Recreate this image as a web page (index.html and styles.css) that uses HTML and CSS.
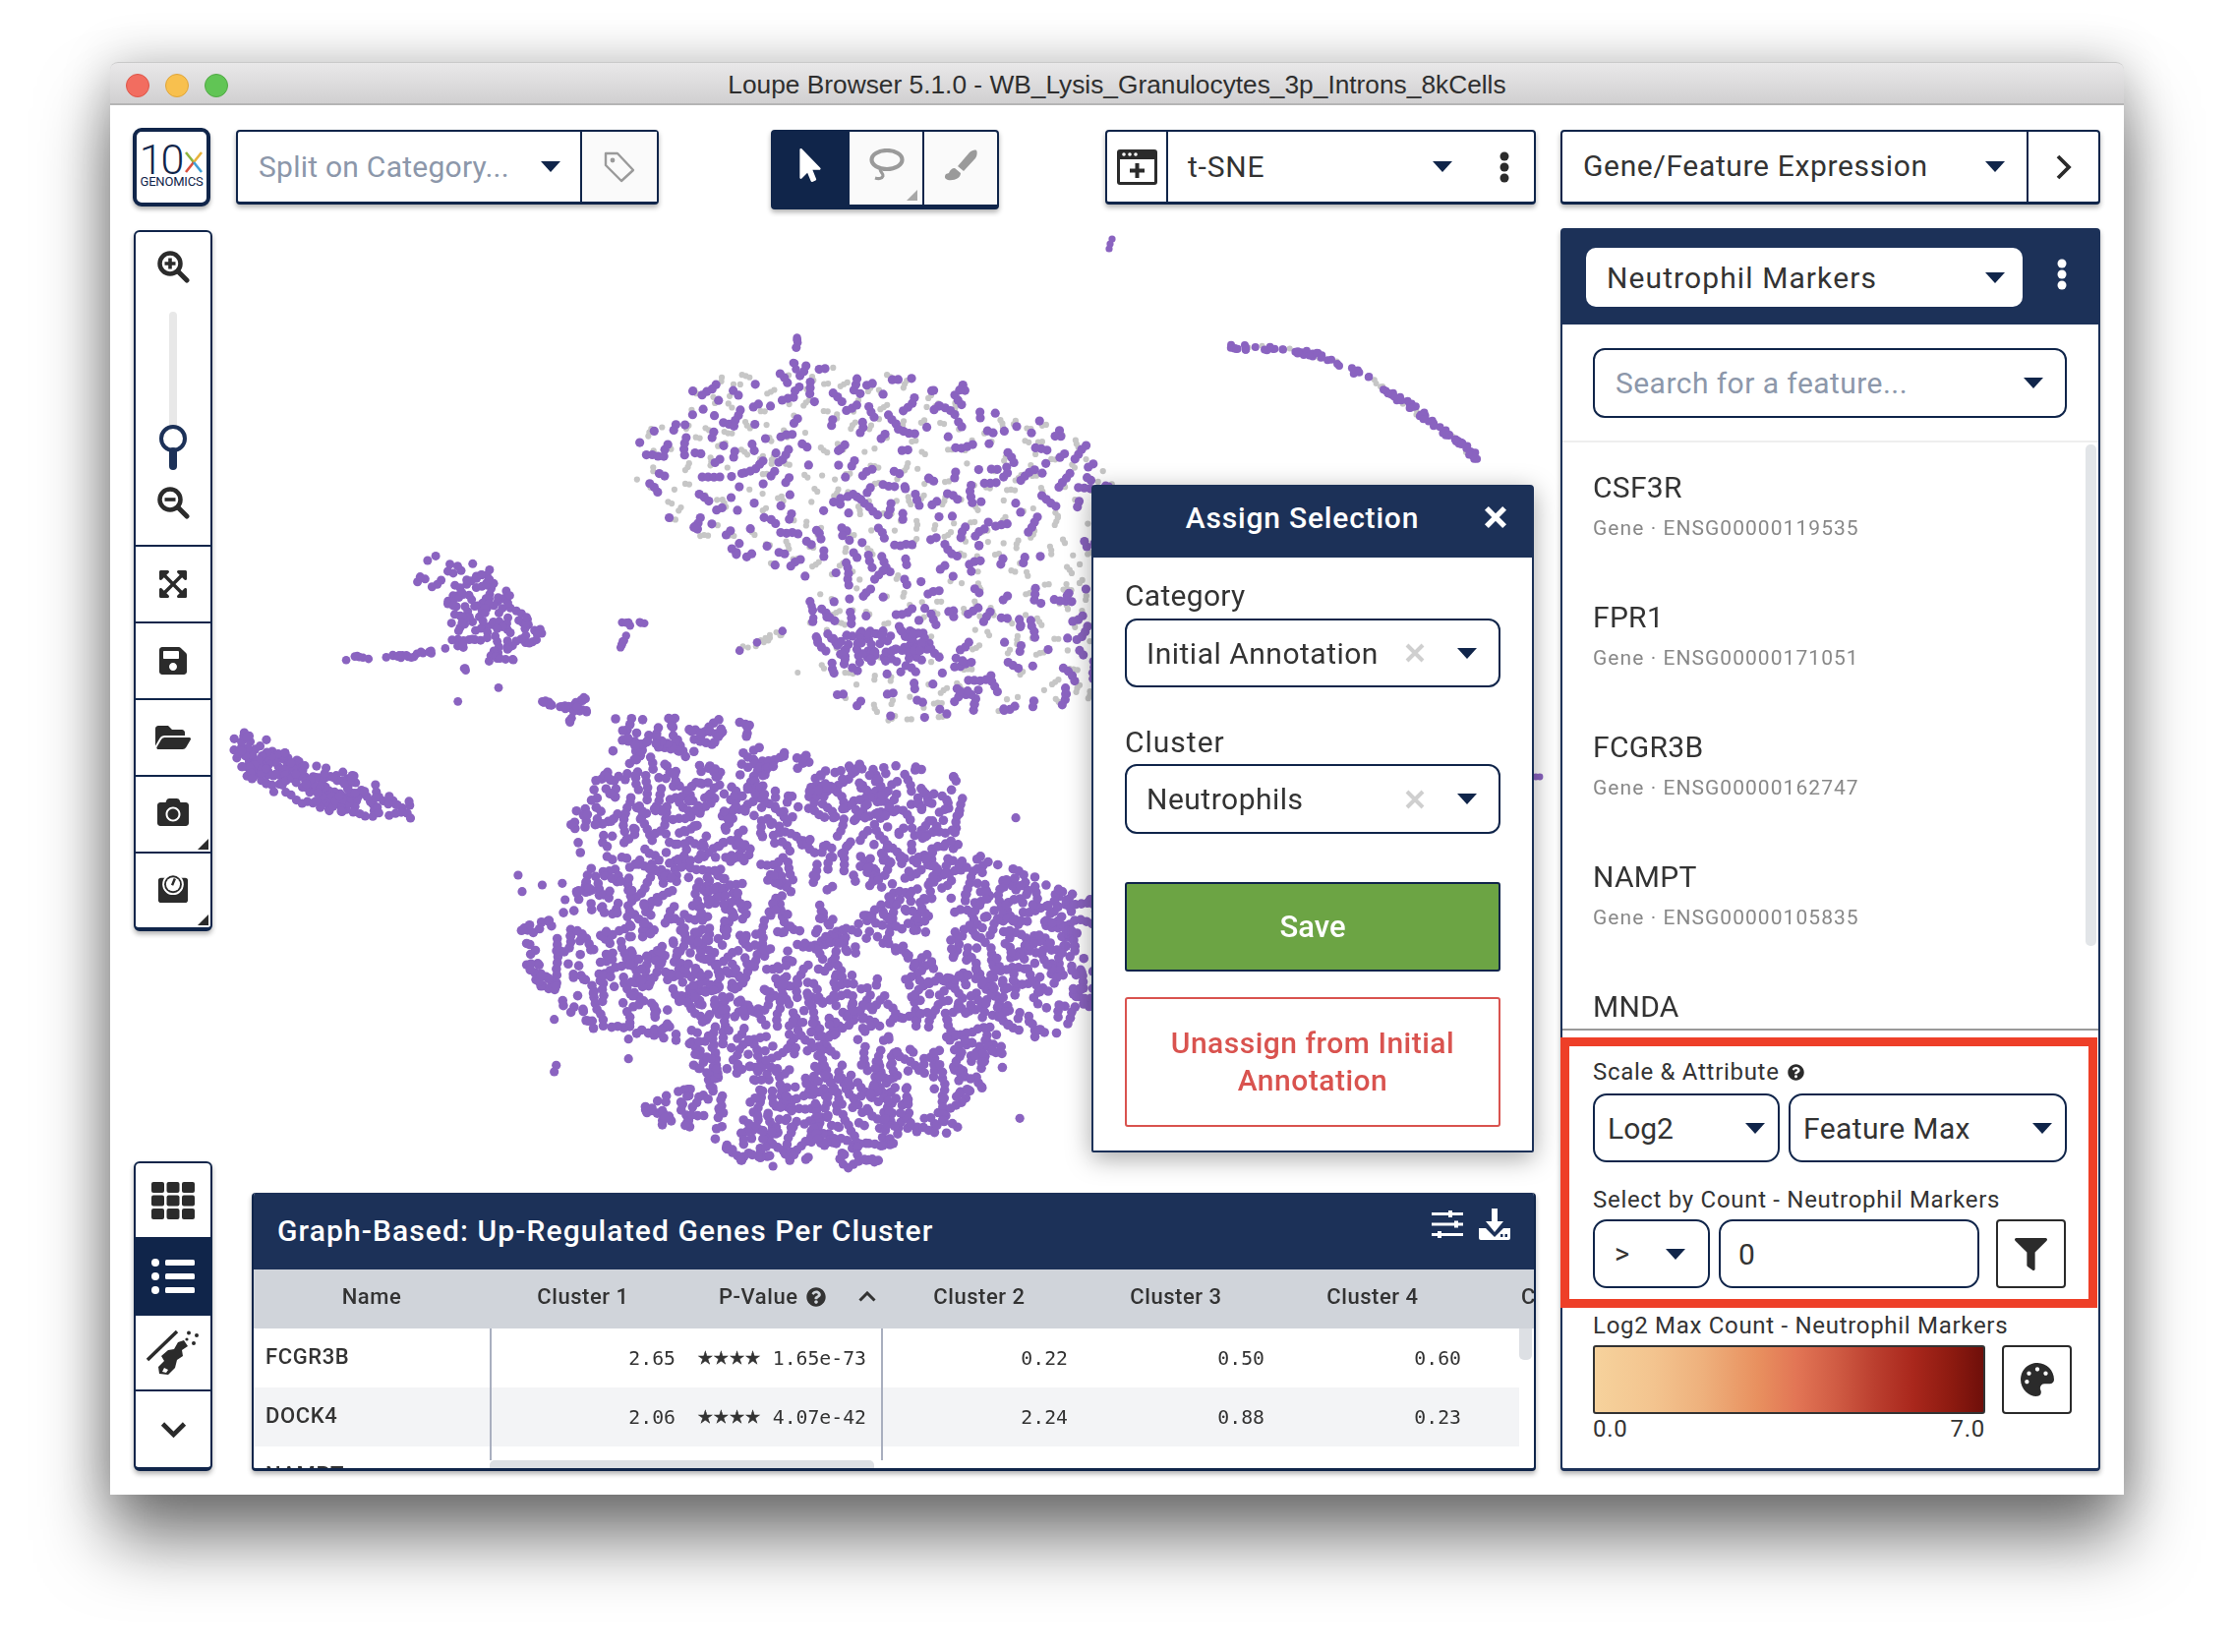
FILE: index.html
```html
<!DOCTYPE html>
<html lang="en">
<head>
<meta charset="utf-8">
<title>Loupe Browser</title>
<link rel="stylesheet" href="styles.css">
</head>
<body>
<div class="window">
  <header class="titlebar">
    <div class="lights"><i class="light red"></i><i class="light yellow"></i><i class="light green"></i></div>
    <div class="wintitle">Loupe Browser 5.1.0 - WB_Lysis_Granulocytes_3p_Introns_8kCells</div>
  </header>
  <div class="content">
    <aside class="rail">
      <div class="logo">
        <div class="logo-top"><span class="logo-ten">10</span><svg class="logo-x" viewBox="0 0 20 22"><path d="M2 1 L10 11" stroke="#8db53c" stroke-width="2.600" fill="none"/><path d="M18 1 L10 11" stroke="#e8b23a" stroke-width="2.600" fill="none"/><path d="M10 11 L2 21" stroke="#d94f3d" stroke-width="2.600" fill="none"/><path d="M10 11 L18 21" stroke="#3f9fd8" stroke-width="2.600" fill="none"/></svg></div>
        <div class="logo-sub">GENOMICS</div>
      </div>
      <div class="tools">
        <div class="tool zoomtool">
          <svg class="ic-mag" viewBox="0 0 34 34"><circle cx="14" cy="14" r="10.500" fill="none" stroke="#2b2b2b" stroke-width="4.500"/><path d="M22 22 L31 31" stroke="#2b2b2b" stroke-width="5" stroke-linecap="round"/><path d="M14 8.500v11M8.500 14h11" stroke="#2b2b2b" stroke-width="3.600"/></svg>
          <div class="slider"><div class="slider-track"></div><svg class="slider-knob" viewBox="0 0 34 48"><circle cx="17" cy="15" r="12" fill="#fff" stroke="#1c3158" stroke-width="4"/><path d="M17 28 V43" stroke="#1c3158" stroke-width="8" stroke-linecap="round"/></svg></div>
          <svg class="ic-mag" viewBox="0 0 34 34"><circle cx="14" cy="14" r="10.500" fill="none" stroke="#2b2b2b" stroke-width="4.500"/><path d="M22 22 L31 31" stroke="#2b2b2b" stroke-width="5" stroke-linecap="round"/><path d="M8.500 14h11" stroke="#2b2b2b" stroke-width="3.600"/></svg>
        </div>
        <div class="tool"><svg class="ic-28" viewBox="0 32 448 448"><path fill="#2b2b2b" d="M448.100 344v112c0 13.300-10.700 24-24 24h-112c-21.400 0-32.100-25.900-17-41l36.200-36.200L224 295.600 116.800 402.900 153 439c15.100 15.100 4.400 41-17 41H24c-13.300 0-24-10.700-24-24V344c0-21.400 25.900-32.100 41-17l36.200 36.200L184.500 256 77.200 148.700 41 185c-15.100 15.100-41 4.400-41-17V56c0-13.300 10.700-24 24-24h112c21.400 0 32.100 25.900 17 41l-36.200 36.200L224 216.400l107.300-107.300L295.100 73c-15.100-15.100-4.400-41 17-41h112c13.300 0 24 10.700 24 24v112c0 21.400-25.900 32.100-41 17l-36.200-36.200L263.600 256l107.300 107.300 36.200-36.200c15.100-15.200 41-4.500 41 16.900z"/></svg></div>
        <div class="tool"><svg class="ic-30" viewBox="0 0 448 512"><path fill="#2b2b2b" d="M433.941 129.941l-83.882-83.882A48 48 0 0 0 316.118 32H48C21.490 32 0 53.490 0 80v352c0 26.510 21.490 48 48 48h352c26.510 0 48-21.490 48-48V163.882a48 48 0 0 0-14.059-33.941zM224 416c-35.346 0-64-28.654-64-64 0-35.346 28.654-64 64-64s64 28.654 64 64c0 35.346-28.654 64-64 64zm96-304.520V212c0 6.627-5.373 12-12 12H76c-6.627 0-12-5.373-12-12V108c0-6.627 5.373-12 12-12h228.520c3.183 0 6.235 1.264 8.485 3.515l3.480 3.480A11.996 11.996 0 0 1 320 111.480z"/></svg></div>
        <div class="tool"><svg class="ic-36" viewBox="0 0 576 512"><path fill="#2b2b2b" d="M572.694 292.093L500.270 416.248A63.997 63.997 0 0 1 444.989 448H45.025c-18.523 0-30.064-20.093-20.731-36.093l72.424-124.155A64 64 0 0 1 152 256h399.964c18.523 0 30.064 20.093 20.730 36.093zM152 224h328v-48c0-26.510-21.490-48-48-48H272l-64-64H48C21.490 64 0 85.490 0 112v278.046l69.077-118.418C86.214 242.250 117.989 224 152 224z"/></svg></div>
        <div class="tool"><svg class="ic-32" viewBox="0 0 512 512"><path fill="#2b2b2b" d="M512 144v288c0 26.500-21.500 48-48 48H48c-26.500 0-48-21.500-48-48V144c0-26.500 21.500-48 48-48h88l12.300-32.900c7-18.700 24.900-31.100 44.900-31.100h125.500c20 0 37.900 12.400 44.900 31.100L376 96h88c26.500 0 48 21.500 48 48zM376 288c0-66.200-53.800-120-120-120s-120 53.800-120 120 53.800 120 120 120 120-53.800 120-120zm-32 0c0 48.500-39.500 88-88 88s-88-39.500-88-88 39.500-88 88-88 88 39.500 88 88z"/></svg><i class="corner"></i></div>
        <div class="tool"><svg class="ic-32" viewBox="0 0 34 32"><path fill="#2b2b2b" d="M4 5h26a3 3 0 0 1 3 3v21a3 3 0 0 1-3 3H4a3 3 0 0 1-3-3V8a3 3 0 0 1 3-3z"/><circle cx="17" cy="12" r="11.500" fill="#fff"/><circle cx="17" cy="12" r="9.500" fill="#2b2b2b"/><circle cx="17" cy="12" r="7.500" fill="#fff"/><path d="M16 13 L19 6" stroke="#2b2b2b" stroke-width="2.600"/></svg><i class="corner"></i></div>
      </div>
      <div class="tools tools-low">
        <div class="tool"><svg class="ic-44" viewBox="0 0 44 38"><g fill="#2b2b2b"><rect x="0" y="0" width="13" height="11" rx="2"/><rect x="15.500" y="0" width="13" height="11" rx="2"/><rect x="31" y="0" width="13" height="11" rx="2"/><rect x="0" y="13.500" width="13" height="11" rx="2"/><rect x="15.500" y="13.500" width="13" height="11" rx="2"/><rect x="31" y="13.500" width="13" height="11" rx="2"/><rect x="0" y="27" width="13" height="11" rx="2"/><rect x="15.500" y="27" width="13" height="11" rx="2"/><rect x="31" y="27" width="13" height="11" rx="2"/></g></svg></div>
        <div class="tool tool-on"><svg class="ic-44" viewBox="0 0 44 38"><g fill="#fff"><circle cx="4" cy="5" r="4"/><circle cx="4" cy="19" r="4"/><circle cx="4" cy="33" r="4"/><rect x="14" y="2" width="30" height="6" rx="1.500"/><rect x="14" y="16" width="30" height="6" rx="1.500"/><rect x="14" y="30" width="30" height="6" rx="1.500"/></g></svg></div>
        <div class="tool"><svg class="ic-54" viewBox="0 0 54 46"><path d="M1 30 L31 1" stroke="#2b2b2b" stroke-width="3.500"/><path fill="#2b2b2b" d="M38 10l4 6-6 4 1 6-6 4-2 8-7 7-9-1-1-7 6-6-3-5 7-6 6-1 4-7zM18 38l-2 4 4 1 2-3z"/><circle cx="43" cy="2.500" r="2" fill="#2b2b2b"/><circle cx="51" cy="5" r="2" fill="#2b2b2b"/><circle cx="48" cy="13" r="2" fill="#2b2b2b"/><circle cx="41" cy="9" r="1.600" fill="#2b2b2b"/></svg></div>
        <div class="tool"><svg class="ic-26" viewBox="0 0 26 16"><path d="M2 2 L13 13 L24 2" fill="none" stroke="#2b2b2b" stroke-width="4.600"/></svg></div>
      </div>
    </aside>

    <main class="center">
      <div class="topbar">
        <div class="box split">
          <div class="box-main"><span class="placeholder ph-split">Split on Category...</span><i class="caret"></i></div>
          <div class="box-side"><svg class="ic-tag" viewBox="0 0 32 32"><path d="M2 2h12l16 17-12 11L2 14z" fill="none" stroke="#9a9a9a" stroke-width="2.400" stroke-linejoin="round"/><circle cx="9" cy="9" r="2.400" fill="#9a9a9a"/></svg></div>
        </div>
        <div class="modes">
          <div class="mode mode-on"><svg class="ic-cursor" viewBox="0 0 320 512"><path fill="#fff" d="M302.189 329.126H196.105l55.831 135.993c3.889 9.428-.555 19.999-9.444 23.999l-49.165 21.427c-9.165 4-19.443-.571-23.332-9.714l-53.053-129.136-86.664 89.138C18.729 472.710 0 463.554 0 447.977V18.299C0 1.899 19.921-6.096 30.277 5.443l284.412 292.542c11.472 11.179 3.007 31.141-12.500 31.141z"/></svg></div>
          <div class="mode"><svg class="ic-lasso" viewBox="0 0 38 34"><ellipse cx="20" cy="11.500" rx="15.500" ry="9.500" fill="none" stroke="#9a9a9a" stroke-width="4.200"/><path d="M14 20c-3 3 3 5 2 8-1 3-5 3-8 2" fill="none" stroke="#9a9a9a" stroke-width="3.200"/></svg><i class="corner corner-gray"></i></div>
          <div class="mode"><svg class="ic-brush" viewBox="0 0 34 32"><path fill="#9a9a9a" d="M33 1c1 1 1 5-1 8L20 22l-6-5L26 3c2-2 6-3 7-2z"/><path fill="#9a9a9a" d="M11 19l6 5c0 5-6 8-13 7-3-1-4-3-2-6l3-1c1-3 3-5 6-5z"/></svg></div>
        </div>
        <div class="box tsne">
          <div class="box-icon"><svg class="ic-win" viewBox="0 0 41 36"><path fill="#2b2b2b" d="M3 0h35a3 3 0 0 1 3 3v30a3 3 0 0 1-3 3H3a3 3 0 0 1-3-3V3a3 3 0 0 1 3-3z"/><rect x="3" y="10" width="35" height="23" fill="#fff"/><circle cx="7" cy="5" r="1.800" fill="#fff"/><circle cx="13" cy="5" r="1.800" fill="#fff"/><circle cx="19" cy="5" r="1.800" fill="#fff"/><path d="M20.500 14v15M13 21.500h15" stroke="#2b2b2b" stroke-width="4"/></svg></div>
          <div class="box-main"><span class="val val-tsne">t-SNE</span><i class="caret caret-push"></i><svg class="ic-dots" viewBox="0 0 10 32"><circle cx="5" cy="5" r="4.500"/><circle cx="5" cy="16" r="4.500"/><circle cx="5" cy="27" r="4.500"/></svg></div>
        </div>
      </div>

      <div class="plot">
        <canvas id="scatter" class="scatter" width="1370" height="999"></canvas>
        <section class="modal">
          <div class="modal-head"><span class="modal-title">Assign Selection</span><svg class="ic-close" viewBox="0 0 20 20"><path d="M3 3 L17 17 M17 3 L3 17" stroke="#fff" stroke-width="4.200"/></svg></div>
          <div class="modal-body">
            <div class="mlabel">Category</div>
            <div class="msel"><span class="mval">Initial Annotation</span><svg class="ic-x" viewBox="0 0 20 20"><path d="M2 2 L18 18 M18 2 L2 18" stroke="#cfcfcf" stroke-width="4"/></svg><i class="caret"></i></div>
            <div class="mlabel mlabel2">Cluster</div>
            <div class="msel msel2"><span class="mval">Neutrophils</span><svg class="ic-x" viewBox="0 0 20 20"><path d="M2 2 L18 18 M18 2 L2 18" stroke="#cfcfcf" stroke-width="4"/></svg><i class="caret"></i></div>
            <div class="btn-save">Save</div>
            <div class="btn-unassign">Unassign from Initial<br>Annotation</div>
          </div>
        </section>
      </div>

      <section class="tablepanel">
        <div class="tp-head"><span class="tp-title">Graph-Based: Up-Regulated Genes Per Cluster</span>
          <svg class="ic-sliders" viewBox="0 0 32 28"><g fill="#fff"><rect y="2" width="32" height="3"/><rect y="12.500" width="32" height="3"/><rect y="23" width="32" height="3"/><rect x="17" y="0" width="4" height="7"/><rect x="23" y="10.500" width="4" height="7"/><rect x="6" y="21" width="4" height="7"/></g></svg>
          <svg class="ic-dl" viewBox="0 0 32 32"><path fill="#fff" d="M13 0h6v13h6L16 24 7 13h6z"/><path fill="#fff" d="M0 20h7l9 9 9-9h7v10a2 2 0 0 1-2 2H2a2 2 0 0 1-2-2z"/><rect x="22" y="26" width="2.500" height="3" fill="#1c3158"/><rect x="26.500" y="26" width="2.500" height="3" fill="#1c3158"/></svg>
        </div>
        <div class="tbl-head">
          <div class="th">Name</div><div class="th">Cluster 1</div>
          <div class="th th-p"><span>P-Value</span><svg class="ic-help" viewBox="0 0 512 512"><path fill="#333" d="M504 256c0 136.997-111.043 248-248 248S8 392.997 8 256C8 119.083 119.043 8 256 8s248 111.083 248 248zM262.655 90c-54.497 0-89.255 22.957-116.549 63.758-3.536 5.286-2.353 12.415 2.715 16.258l34.699 26.310c5.205 3.947 12.621 3.008 16.665-2.122 17.864-22.658 30.113-35.797 57.303-35.797 20.429 0 45.698 13.148 45.698 32.958 0 14.976-12.363 22.667-32.534 33.976C247.128 238.528 216 254.941 216 296v4c0 6.627 5.373 12 12 12h56c6.627 0 12-5.373 12-12v-1.333c0-28.462 83.186-29.647 83.186-106.667 0-58.002-60.165-102-116.531-102zM256 338c-25.365 0-46 20.635-46 46 0 25.364 20.635 46 46 46s46-20.636 46-46c0-25.365-20.635-46-46-46z"/></svg><svg class="ic-up" viewBox="0 0 18 11"><path d="M1.500 9.500 L9 2 L16.500 9.500" fill="none" stroke="#333" stroke-width="3"/></svg></div>
          <div class="th">Cluster 2</div><div class="th">Cluster 3</div><div class="th">Cluster 4</div><div class="th th-cut">Cluster 5</div>
        </div>
        <div class="tbl-body">
          <div class="tr"><div class="td-name">FCGR3B</div><div class="td-num">2.65</div><div class="td-p"><span class="stars">★★★★</span><span>1.65e-73</span></div><div class="td-num">0.22</div><div class="td-num">0.50</div><div class="td-num">0.60</div></div>
          <div class="tr tr-alt"><div class="td-name">DOCK4</div><div class="td-num">2.06</div><div class="td-p"><span class="stars">★★★★</span><span>4.07e-42</span></div><div class="td-num">2.24</div><div class="td-num">0.88</div><div class="td-num">0.23</div></div>
          <div class="tr"><div class="td-name">NAMPT</div></div>
          <i class="vline vline-a"></i><i class="vline vline-b"></i>
          <i class="hscroll"></i><i class="vscroll"></i>
        </div>
      </section>
    </main>

    <aside class="right">
      <div class="box gene">
        <div class="box-main"><span class="val val-gene">Gene/Feature Expression</span><i class="caret"></i></div>
        <div class="box-chev"><svg class="ic-chev" viewBox="0 0 16 26"><path d="M2 2 L13 13 L2 24" fill="none" stroke="#2b2b2b" stroke-width="3.800"/></svg></div>
      </div>
      <section class="panel">
        <div class="panel-head">
          <div class="panel-sel"><span class="val val-neut">Neutrophil Markers</span><i class="caret"></i></div>
          <svg class="ic-dots ic-dots-w" viewBox="0 0 10 32"><circle cx="5" cy="5" r="4.500"/><circle cx="5" cy="16" r="4.500"/><circle cx="5" cy="27" r="4.500"/></svg>
        </div>
        <div class="search-wrap"><div class="search"><span class="placeholder ph-search">Search for a feature...</span><i class="caret"></i></div></div>
        <div class="list">
          <div class="item"><div class="item-name">CSF3R</div><div class="item-sub">Gene · ENSG00000119535</div></div>
          <div class="item"><div class="item-name">FPR1</div><div class="item-sub">Gene · ENSG00000171051</div></div>
          <div class="item"><div class="item-name">FCGR3B</div><div class="item-sub">Gene · ENSG00000162747</div></div>
          <div class="item"><div class="item-name">NAMPT</div><div class="item-sub">Gene · ENSG00000105835</div></div>
          <div class="item"><div class="item-name">MNDA</div></div>
          <i class="list-scroll"></i>
        </div>
        <div class="highlight">
          <div class="lbl">Scale &amp; Attribute <svg class="ic-help2" viewBox="0 0 512 512"><path fill="#2b2b2b" d="M504 256c0 136.997-111.043 248-248 248S8 392.997 8 256C8 119.083 119.043 8 256 8s248 111.083 248 248zM262.655 90c-54.497 0-89.255 22.957-116.549 63.758-3.536 5.286-2.353 12.415 2.715 16.258l34.699 26.310c5.205 3.947 12.621 3.008 16.665-2.122 17.864-22.658 30.113-35.797 57.303-35.797 20.429 0 45.698 13.148 45.698 32.958 0 14.976-12.363 22.667-32.534 33.976C247.128 238.528 216 254.941 216 296v4c0 6.627 5.373 12 12 12h56c6.627 0 12-5.373 12-12v-1.333c0-28.462 83.186-29.647 83.186-106.667 0-58.002-60.165-102-116.531-102zM256 338c-25.365 0-46 20.635-46 46 0 25.364 20.635 46 46 46s46-20.636 46-46c0-25.365-20.635-46-46-46z"/></svg></div>
          <div class="row row-a">
            <div class="sel sel-log"><span class="val">Log2</span><i class="caret"></i></div>
            <div class="sel sel-feat"><span class="val val-feat">Feature Max</span><i class="caret"></i></div>
          </div>
          <div class="lbl lbl2">Select by Count - Neutrophil Markers</div>
          <div class="row row-b">
            <div class="sel sel-gt"><span class="val val-gt">&gt;</span><i class="caret"></i></div>
            <div class="sel sel-num"><span class="val">0</span></div>
            <div class="sqbtn sqbtn-f"><svg class="ic-filter" viewBox="0 0 512 512"><path fill="#2b2b2b" d="M487.976 0H24.028C2.710 0-8.047 25.866 7.058 40.971L192 225.941V432c0 7.831 3.821 15.170 10.237 19.662l80 55.980C298.020 518.690 320 507.493 320 487.980V225.941l184.947-184.970C520.021 25.896 509.338 0 487.976 0z"/></svg></div>
          </div>
        </div>
        <div class="legend">
          <div class="lbl">Log2 Max Count - Neutrophil Markers</div>
          <div class="legend-row">
            <div class="gradient"></div>
            <div class="sqbtn sqbtn-p"><svg class="ic-palette" viewBox="0 0 512 512"><path fill="#2b2b2b" d="M204.300 5C104.900 24.400 24.800 104.300 5.200 203.400c-37 187 131.700 326.400 258.800 306.700 41.200-6.400 61.400-54.600 42.500-91.700-23.100-45.400 9.900-98.400 60.900-98.400h79.700c35.800 0 64.800-29.600 64.900-65.300C511.500 97.100 368.100-26.900 204.300 5zM96 320c-17.700 0-32-14.300-32-32s14.300-32 32-32 32 14.300 32 32-14.300 32-32 32zm32-128c-17.700 0-32-14.300-32-32s14.300-32 32-32 32 14.300 32 32-14.300 32-32 32zm128-64c-17.700 0-32-14.300-32-32s14.300-32 32-32 32 14.300 32 32-14.300 32-32 32zm128 64c-17.700 0-32-14.300-32-32s14.300-32 32-32 32 14.300 32 32-14.300 32-32 32z"/></svg></div>
          </div>
          <div class="legend-scale"><span>0.0</span><span>7.0</span></div>
        </div>
      </section>
    </aside>
  </div>
</div>
<script src="script.js"></script>
</body>
</html>
```
FILE: styles.css
```css
* { box-sizing: border-box; }
html, body { margin: 0; padding: 0; background: #fff; }
body { width: 2272px; height: 1680px; overflow: hidden; font-family: Roboto, "Liberation Sans", sans-serif; color: #333; }
svg { display: block; flex: none; }
i { display: block; }

.window { width: 2048px; height: 1457px; margin: 63px 0 0 112px; background: #fff; border-radius: 8px 8px 0 0; display: flex; flex-direction: column; box-shadow: 0 46px 70px rgba(0,0,0,.52), 0 0 50px rgba(0,0,0,.22); }

.titlebar { height: 44px; flex: none; position: relative; display: flex; align-items: center; justify-content: center; background: linear-gradient(#e9e8e9, #d1d0d1); border-bottom: 2px solid #b5b5b5; border-top: 1px solid #c9c9c9; border-radius: 8px 8px 0 0; }
.lights { position: absolute; left: 16px; top: 11px; display: flex; gap: 16px; }
.light { width: 24px; height: 24px; border-radius: 50%; }
.red { background: #f26d60; border: 1px solid #de5548; }
.yellow { background: #f8c04e; border: 1px solid #dfa53a; }
.green { background: #61c555; border: 1px solid #51a945; }
.wintitle { font-family: "Liberation Sans", sans-serif; font-size: 26.300px; color: #2e2e2e; padding-top: 3px; white-space: nowrap; }

.content { flex: 1; display: flex; padding: 25px 24px 24px 24px; min-height: 0; }

.rail { width: 80px; flex: none; display: flex; flex-direction: column; }
.logo { width: 79px; height: 80px; margin: -2px 0 0 -1px; border: 4px solid #10254a; border-radius: 9px; display: flex; flex-direction: column; align-items: center; background: #fff; box-shadow: 0 3px 4px rgba(0,0,0,.3); }
.logo-top { display: flex; align-items: center; height: 40px; margin-top: 8px; }
.logo-ten { font-size: 43px; font-weight: 300; line-height: 40px; color: #10254a; letter-spacing: -2px; }
.logo-x { width: 20px; height: 24px; margin-top: 6px; margin-left: 2px; }
.logo-sub { font-size: 13px; line-height: 14px; color: #10254a; letter-spacing: -.2px; margin-top: -4px; }

.tools { width: 80px; margin-top: 24px; border: 2px solid #10254a; border-bottom-width: 4px; border-radius: 6px; background: #fff; box-shadow: 0 3px 5px rgba(0,0,0,.3); }
.tools-low { margin-top: auto; }
.tool { height: 78px; position: relative; display: flex; align-items: center; justify-content: center; border-bottom: 2px solid #10254a; }
.tool:last-child { border-bottom: 0; height: 75px; }
.tools-low .tool { height: 77px; }
.tools-low .tool-on { background: #10254a; height: 78px; }
.zoomtool { height: 320px; flex-direction: column; justify-content: flex-start; padding-top: 18px; }
.ic-mag { width: 34px; height: 34px; }
.slider { width: 34px; height: 192px; margin: 8px 0 6px; position: relative; }
.slider-track { width: 8px; height: 130px; margin: 21px auto 0; background: #e8e8e8; border-radius: 4px; }
.slider-knob { width: 34px; height: 48px; position: absolute; left: 0; top: 135px; }
.ic-28 { width: 28px; height: 28px; }
.ic-30 { width: 30px; height: 32px; }
.ic-36 { width: 36px; height: 32px; }
.ic-32 { width: 32px; height: 32px; margin-top: -5px; }
.ic-44 { width: 44px; height: 38px; }
.ic-54 { width: 54px; height: 46px; }
.ic-26 { width: 27px; height: 16px; }
.corner { position: absolute; right: 2px; bottom: 2px; width: 0; height: 0; border-style: solid; border-width: 0 0 11px 11px; border-color: transparent transparent #2b2b2b transparent; }
.corner-gray { border-color: transparent transparent #a8a8a8 transparent; right: 5px; bottom: 4px; }

.center { width: 1322px; flex: none; margin-left: 24px; display: flex; flex-direction: column; min-height: 0; }
.topbar { height: 81px; flex: none; display: flex; align-items: flex-start; }
.box { height: 76px; border: 2px solid #10254a; border-bottom-width: 3px; border-radius: 4px; background: #fff; display: flex; box-shadow: 0 3px 5px rgba(0,0,0,.3); }
.box-main { flex: 1; display: flex; align-items: center; justify-content: space-between; min-width: 0; }
.split { width: 430px; }
.split .box-main { padding: 0 20px 0 21px; }
.box-side { width: 78px; flex: none; background: #fafafa; border-left: 2px solid #10254a; display: flex; align-items: center; justify-content: center; }
.ic-tag { width: 32px; height: 32px; }
.placeholder { color: #8c97aa; font-size: 30px; white-space: nowrap; }
.ph-split { letter-spacing: .25px; }
.ph-search { letter-spacing: .45px; }
.val { font-size: 30px; color: #333; white-space: nowrap; }
.val-gene { letter-spacing: .65px; margin-top: -2px; }
.val-neut { letter-spacing: 1.100px; }
.val-tsne { letter-spacing: .8px; }
.val-feat { letter-spacing: .4px; }
.caret { width: 0; height: 0; flex: none; border-left: 10px solid transparent; border-right: 10px solid transparent; border-top: 11px solid #10254a; }

.modes { width: 232px; height: 81px; flex: none; margin-left: 114px; display: flex; border: 2px solid #10254a; border-bottom-width: 5px; border-radius: 4px; box-shadow: 0 3px 5px rgba(0,0,0,.3); background: #fafafa; }
.mode { flex: 1; position: relative; display: flex; align-items: center; justify-content: center; border-left: 2px solid #10254a; padding-bottom: 6px; }
.mode-on { background: #10254a; border-left: 0; flex: none; width: 76px; }
.ic-cursor { width: 22px; height: 34px; }
.ic-lasso { width: 38px; height: 34px; }
.ic-brush { width: 34px; height: 32px; }

.tsne { width: 438px; margin-left: auto; }
.box-icon { width: 62px; flex: none; border-right: 2px solid #10254a; display: flex; align-items: center; justify-content: center; }
.ic-win { width: 41px; height: 36px; }
.tsne .box-main { padding: 0 25px 0 20px; }
.caret-push { margin-left: auto; margin-right: 48px; }
.ic-dots { width: 10px; height: 32px; fill: #2b2b2b; }
.ic-dots-w { fill: #fff; }

.plot { flex: 1; position: relative; min-height: 0; }
.scatter { position: absolute; left: -20px; top: 0; width: 1370px; height: 999px; }

.modal { position: absolute; left: 870px; top: 280px; width: 450px; height: 679px; background: #fff; border: 2px solid #1c3158; border-radius: 4px 4px 2px 2px; box-shadow: 0 6px 26px rgba(0,0,0,.35); z-index: 3; }
.modal-head { height: 72px; background: #1c3158; color: #fff; display: flex; align-items: center; position: relative; justify-content: center; }
.modal-title { font-size: 30px; font-weight: 500; margin: -9px 0 0 -21px; letter-spacing: .8px; }
.ic-close { position: absolute; right: 24px; top: 18px; width: 26px; height: 26px; }
.modal-body { padding: 22px 32px 0; }
.mlabel { font-size: 30px; line-height: 36px; color: #333; margin-top: -1px; letter-spacing: .3px; }
.mlabel2 { margin-top: 38px; letter-spacing: 1px; }
.msel { height: 70px; margin-top: 5px; border: 2px solid #10254a; border-radius: 12px; display: flex; align-items: center; padding: 0 22px 0 20px; }
.msel2 { margin-top: 4px; height: 71px; }
.mval { font-size: 30px; flex: 1; color: #333; white-space: nowrap; letter-spacing: .5px; }
.ic-x { width: 20px; height: 20px; margin-right: 33px; }
.btn-save { height: 91px; margin-top: 49px; background: #6ca444; border: 2px solid #10254a; border-radius: 3px; color: #fff; font-size: 31px; font-weight: 500; display: flex; align-items: center; justify-content: center; }
.btn-unassign { height: 132px; margin-top: 26px; border: 2px solid #d9534f; border-radius: 3px; color: #d9534f; font-size: 30px; font-weight: 500; letter-spacing: .5px; line-height: 38px; text-align: center; display: flex; align-items: center; justify-content: center; }

.tablepanel { height: 283px; flex: none; margin-left: 16px; position: relative; z-index: 2; border: 2px solid #10254a; border-top: 0; border-bottom-width: 3px; border-radius: 4px; background: #fff; overflow: hidden; box-shadow: 0 3px 5px rgba(0,0,0,.3); }
.tp-head { height: 78px; background: #1c3158; color: #fff; display: flex; align-items: center; padding: 0 24px 0 24px; }
.tp-title { font-size: 30px; font-weight: 500; flex: 1; letter-spacing: 1.100px; white-space: nowrap; margin-top: -2px; }
.ic-sliders { width: 32px; height: 28px; margin: -14px 16px 0 0; }
.ic-dl { width: 32px; height: 32px; margin-top: -14px; }
.tbl-head { height: 60px; background: #d0d4da; display: grid; grid-template-columns: 240px 190px 208px 200px 200px 200px 60px; }
.th { font-size: 22px; font-weight: 500; letter-spacing: .55px; color: #333; display: flex; align-items: center; justify-content: center; white-space: nowrap; padding-bottom: 5px; }
.th-p { justify-content: flex-start; padding-left: 43px; }
.th-cut { justify-content: flex-start; padding-left: 51px; }
.ic-help { width: 20px; height: 20px; margin-left: 8px; }
.ic-up { width: 18px; height: 11px; margin-left: 33px; }
.tbl-body { position: relative; height: 145px; overflow: hidden; }
.tr { height: 60px; width: 1287px; display: grid; grid-template-columns: 240px 190px 208px 200px 200px 200px; overflow: hidden; align-items: center; }
.tr-alt { background: #f3f4f6; }
.td-name { font-size: 22px; font-weight: 500; letter-spacing: .6px; padding-left: 12px; color: #333; margin-top: -3px; }
.td-num { font-family: "DejaVu Sans Mono", monospace; font-size: 19.800px; color: #333; text-align: right; padding-right: 10px; }
.tr .td-num:nth-child(2) { padding-right: 1px; }
.td-p { font-family: "DejaVu Sans Mono", monospace; font-size: 19.800px; color: #333; display: flex; justify-content: flex-end; gap: 12px; padding-right: 15px; align-items: center; }
.stars { font-size: 18px; letter-spacing: 0; font-family: "DejaVu Sans", sans-serif; line-height: 20px; -webkit-text-stroke: .5px #333; }
.vline { position: absolute; top: 0; width: 2px; height: 134px; background: #a9afbf; }
.vline-a { left: 240px; }
.vline-b { left: 638px; }
.hscroll { position: absolute; left: 240px; top: 134px; width: 391px; height: 11px; background: #dde0e4; border-radius: 5px 5px 0 0; }
.vscroll { position: absolute; left: 1287px; top: 0; width: 13px; height: 32px; background: #dde0e4; border-radius: 0 0 5px 5px; }

.right { width: 549px; flex: none; margin-left: 25px; display: flex; flex-direction: column; min-height: 0; }
.gene { flex: none; }
.gene .box-main { padding: 0 22px 0 21px; }
.box-chev { width: 73px; flex: none; border-left: 2px solid #10254a; display: flex; align-items: center; justify-content: center; }
.ic-chev { width: 16px; height: 26px; }
.panel { flex: 1; margin-top: 24px; min-height: 0; display: flex; flex-direction: column; border: 2px solid #1c3158; border-bottom-width: 3px; border-radius: 4px; background: #fff; box-shadow: 0 3px 5px rgba(0,0,0,.3); }
.panel-head { height: 96px; flex: none; background: #1c3158; display: flex; align-items: flex-start; padding: 18px 0 0 24px; gap: 35px; }
.panel-sel { width: 444px; height: 60px; background: #fff; border-radius: 10px; display: flex; align-items: center; justify-content: space-between; padding: 0 18px 0 21px; }
.panel-head .ic-dots { margin-top: 11px; }
.search-wrap { height: 120px; flex: none; padding: 24px 32px 0 31px; border-bottom: 2px solid #eee; }
.search { height: 71px; border: 2px solid #10254a; border-radius: 12px; display: flex; align-items: center; justify-content: space-between; padding: 0 22px 0 21px; }
.list { flex: 1; min-height: 0; overflow: hidden; position: relative; padding: 28px 0 0 31px; border-bottom: 2px solid #9a9a9a; }
.item { height: 132px; }
.item-name { font-size: 30px; line-height: 36px; color: #333; letter-spacing: .3px; }
.item-sub { font-size: 21px; line-height: 30px; margin-top: 8px; color: #888; letter-spacing: 1.050px; white-space: nowrap; }
.list-scroll { position: absolute; right: 2px; top: 2px; width: 11px; height: 510px; background: #e2e5e8; border-radius: 5px; }

.highlight { height: 275px; flex: none; margin: 7px 1px 0 -2px; border: 9px solid #ee3f28; padding: 11px 0 0 24px; }
.lbl { font-size: 24px; line-height: 30px; color: #333; display: flex; align-items: center; gap: 8px; white-space: nowrap; letter-spacing: .7px; }
.lbl2 { margin-top: 23px; }
.ic-help2 { width: 17px; height: 17px; }
.row { display: flex; }
.row-a { margin-top: 7px; gap: 9px; }
.row-b { margin-top: 5px; gap: 9px; }
.sel { height: 70px; border: 2px solid #10254a; border-radius: 14px; display: flex; align-items: center; justify-content: space-between; }
.sel-log { width: 190px; padding: 0 13px 0 13px; }
.sel-feat { width: 283px; padding: 0 13px 0 13px; }
.sel-gt { width: 119px; padding: 0 23px 0 20px; }
.val-gt { font-size: 29px; }
.sel-num { width: 265px; padding: 0 18px; justify-content: flex-start; }
.sqbtn { height: 70px; width: 71px; margin-left: 8px; border: 2px solid #2b2b2b; border-radius: 4px; display: flex; align-items: center; justify-content: center; }
.ic-filter { width: 33px; height: 33px; }
.legend { height: 163px; flex: none; padding: 3px 0 0 31px; }
.legend-row { display: flex; margin-top: 5px; }
.gradient { width: 399px; height: 70px; border: 2px solid #333; border-radius: 3px; background: linear-gradient(90deg, #f6d29c 0%, #f3c48f 15%, #eeb07c 28%, #e8905f 42%, #e27555 52%, #d05c44 62%, #bb3f2f 72%, #a9271c 82%, #8c1a10 92%, #6f0f0a 100%); }
.sqbtn-p { margin-left: 17px; }
.ic-palette { width: 34px; height: 34px; }
.legend-scale { width: 399px; display: flex; justify-content: space-between; font-size: 24px; letter-spacing: .7px; line-height: 30px; color: #333; }
```
FILE: script.js
```js
(function () {
  var cv = document.getElementById('scatter');
  var ctx = cv.getContext('2d');
  var OX = 220, OY = 213;
  var PURPLE = '#8a63c0', GRAY = '#c6c6c6';

  var seed = 20210501;
  function rnd() {
    seed |= 0; seed = seed + 0x6D2B79F5 | 0;
    var t = Math.imul(seed ^ seed >>> 15, 1 | seed);
    t = t + Math.imul(t ^ t >>> 7, 61 | t) ^ t;
    return ((t ^ t >>> 14) >>> 0) / 4294967296;
  }

  function z8(p) { return [220 + p[0] / 1.742, 320 + p[1] / 3]; }
  function z9(p) { return [480 + p[0] / 2.45, 700 + p[1] / 3]; }
  function z2(p) { return [1100 + p[0] / 1.425, 50 + p[1] / 3]; }

  function inside(poly, x, y) {
    var c = false;
    for (var i = 0, j = poly.length - 1; i < poly.length; j = i++) {
      var a = poly[i], b = poly[j];
      if ((a[1] > y) !== (b[1] > y) && x < (b[0] - a[0]) * (y - a[1]) / (b[1] - a[1]) + a[0]) c = !c;
    }
    return c;
  }
  function bounds(poly) {
    var b = [1e9, 1e9, -1e9, -1e9];
    poly.forEach(function (p) {
      b[0] = Math.min(b[0], p[0]); b[1] = Math.min(b[1], p[1]);
      b[2] = Math.max(b[2], p[0]); b[3] = Math.max(b[3], p[1]);
    });
    return b;
  }
  function dot(x, y, r, color) {
    ctx.fillStyle = color;
    ctx.beginPath();
    ctx.arc(x - OX, y - OY, r, 0, Math.PI * 2);
    ctx.fill();
  }
  // smooth noise that opens white gaps in the clouds
  var NG = 64, grid = [];
  for (var n = 0; n < NG * NG; n++) grid.push(rnd());
  function noise(x, y, cell) {
    var fx = x / cell, fy = y / cell, ix = Math.floor(fx), iy = Math.floor(fy);
    var tx = fx - ix, ty = fy - iy;
    function g(a, b) { return grid[((a % NG) + NG) % NG + NG * (((b % NG) + NG) % NG)]; }
    var u = tx * tx * (3 - 2 * tx), v = ty * ty * (3 - 2 * ty);
    return (g(ix, iy) * (1 - u) + g(ix + 1, iy) * u) * (1 - v) + (g(ix, iy + 1) * (1 - u) + g(ix + 1, iy + 1) * u) * v;
  }
  // occupancy hash so clouds keep the spacing of an embedding
  var hash = {};
  function put(x, y) {
    var k = Math.floor(x / 14) + ':' + Math.floor(y / 14);
    (hash[k] = hash[k] || []).push([x, y]);
  }
  function near(x, y, d) {
    var cx = Math.floor(x / 14), cy = Math.floor(y / 14);
    for (var i = -1; i <= 1; i++) for (var j = -1; j <= 1; j++) {
      var c = hash[(cx + i) + ':' + (cy + j)];
      if (!c) continue;
      for (var k = 0; k < c.length; k++) {
        var dx = c[k][0] - x, dy = c[k][1] - y;
        if (dx * dx + dy * dy < d * d) return true;
      }
    }
    return false;
  }
  // short chains of dots inside a polygon
  function cloud(poly, target, minLen, maxLen, r, color, gap, clump, hole, cell) {
    var b = bounds(poly), step = r * 1.3, made = 0, guard = 0;
    while (made < target && guard++ < target * 200) {
      var x = b[0] + rnd() * (b[2] - b[0]), y = b[1] + rnd() * (b[3] - b[1]);
      if (!inside(poly, x, y)) continue;
      if (hole && noise(x, y, cell) < hole) continue;
      if (near(x, y, gap) && rnd() > clump) continue;
      var a = rnd() * Math.PI * 2, len = minLen + Math.floor(rnd() * (maxLen - minLen + 1)), chain = [];
      for (var k = 0; k < len; k++) {
        if (!inside(poly, x, y)) break;
        if (hole && noise(x, y, cell) < hole) break;
        if (k > 0 && near(x, y, gap * 0.8) && rnd() > clump) break;
        chain.push([x, y]);
        a += (rnd() - 0.5) * 0.9;
        x += Math.cos(a) * step; y += Math.sin(a) * step;
      }
      chain.forEach(function (p) { dot(p[0], p[1], r, color); put(p[0], p[1]); });
      made += chain.length;
    }
  }
  function line(pts, count, jitter, r, color) {
    for (var i = 0; i < count; i++) {
      var t = rnd() * (pts.length - 1), k = Math.floor(t), f = t - k;
      var x = pts[k][0] + (pts[k + 1][0] - pts[k][0]) * f;
      var y = pts[k][1] + (pts[k + 1][1] - pts[k][1]) * f;
      dot(x + (rnd() - .5) * jitter, y + (rnd() - .5) * jitter, r, color);
    }
  }

  // top-right cloud: gray underlay, then purple
  var upper = [[1040,150],[1180,175],[1320,205],[1345,290],[1460,320],[1530,355],[1568,470],[1640,560],[1640,1190],[1450,1200],[1300,1230],[1195,1240],[1100,1200],[1080,1100],[1050,1040],[1045,870],[1110,800],[1040,800],[900,740],[860,680],[800,630],[790,560],[735,490],[725,420],[780,310],[880,190],[1000,175]].map(z8);
  cloud(upper, 620, 1, 3, 3.1, GRAY, 11, .05);
  hash = {};
  cloud(upper, 620, 1, 4, 4.6, PURPLE, 13, .14, .24, 28);
  line([[1030,70],[1026,120]].map(z8), 6, 2, 4.2, PURPLE);
  line([[1022,145],[1028,165]].map(z8), 3, 2, 4.2, PURPLE);
  var dense = [[1090,960],[1260,960],[1260,1060],[1090,1060]].map(z8);
  cloud(dense, 70, 3, 7, 4.6, PURPLE, 9, .2);

  // big cloud
  hash = {};
  var big = [[320,90],[600,90],[705,110],[725,200],[840,190],[850,260],[910,230],[1130,235],[1180,240],[1235,320],[1240,430],[1265,510],[1370,555],[1450,605],[1560,650],[1640,700],[1640,900],[1505,1000],[1480,1050],[1360,1100],[1360,1170],[1250,1240],[1190,1310],[1240,1360],[1060,1360],[1050,1420],[960,1470],[670,1440],[600,1370],[620,1230],[560,1340],[460,1340],[420,1280],[500,1230],[590,1200],[480,1080],[390,1050],[300,1040],[130,880],[120,730],[220,690],[290,560],[240,430],[270,330],[300,270],[400,210],[345,190],[370,140]].map(z9);
  cloud(big, 2600, 2, 9, 4.8, PURPLE, 9.500, .22, .3, 24);
  [[115,570],[125,620],[175,600],[225,595],[232,645],[205,1010],[210,1150],[205,1170],[390,1070],[390,1130],[1355,395],[1365,1312],[1127,1312],[670,1440],[750,1458],[925,1452]].map(z9).forEach(function (p) { dot(p[0], p[1], 4.6, PURPLE); });
  line([[165,40],[240,60],[290,70]].map(z9), 16, 3, 4.5, PURPLE);
  line([[245,105],[245,60],[290,20]].map(z9), 10, 3, 4.5, PURPLE);

  // left cloud
  hash = {};
  var leftC = [[380,715],[480,760],[530,880],[590,975],[530,1060],[430,1060],[410,960],[410,860],[350,810]].map(z8);
  cloud(leftC, 150, 2, 6, 4.5, PURPLE, 8, .3, .25, 20);
  line([[225,1048],[340,1042],[405,1020]].map(z8), 26, 4, 4.3, PURPLE);
  line([[440,1075],[450,1098]].map(z8), 3, 2, 4.3, PURPLE);
  [[500,1138],[428,1180]].map(z8).forEach(function (p) { dot(p[0], p[1], 4.4, PURPLE); });
  line([[715,1018],[735,945]].map(z8), 8, 2, 4.2, PURPLE);
  line([[715,940],[760,940]].map(z8), 6, 2, 4.2, PURPLE);
  line([[575,1180],[645,1205]].map(z8), 10, 3, 4.3, PURPLE);
  line([[625,1245],[640,1185],[660,1160]].map(z8), 9, 3, 4.3, PURPLE);
  line([[930,1025],[1005,965]].map(z8), 16, 8, 3, GRAY);
  [[927,1025],[958,1000],[1003,965],[1030,1092]].map(z8).forEach(function (p, i) { dot(p[0], p[1], i === 3 ? 3 : 4.3, i === 3 ? GRAY : PURPLE); });
  line([[1054,870],[1058,940]].map(z8), 4, 2, 4.2, PURPLE);

  // lower-left band
  hash = {};
  var band = [[238,745],[262,745],[300,772],[372,790],[420,815],[418,832],[350,830],[290,812],[250,790],[236,765]];
  cloud(band, 210, 2, 6, 4.6, PURPLE, 7, .4);

  // arc
  var arc = [[210,910],[290,910],[360,945],[430,1020],[490,1110],[540,1190],[580,1260]].map(z2);
  line(arc, 28, 7, 3, GRAY);
  line(arc, 100, 6, 4, PURPLE);

  // lone marks
  dot(1131, 243, 3.6, PURPLE); dot(1129, 248, 3.6, PURPLE); dot(1128, 253, 3.6, PURPLE);
  dot(1562, 790, 3.6, PURPLE); dot(1566, 790, 3.4, PURPLE);
})();
```
